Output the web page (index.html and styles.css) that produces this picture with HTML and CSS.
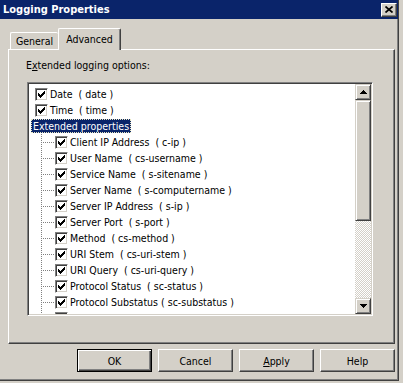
FILE: index.html
```html
<!DOCTYPE html>
<html>
<head>
  <title>Logging Properties</title>
  <link rel="stylesheet" href="styles.css">
</head>
<body>
  <div class="window">
    <div class="titlebar">
      <span class="title">Logging Properties</span>
      <div class="close-btn">
        <svg width="8" height="7" viewBox="0 0 8 7"><path d="M0.5 0.5L7.5 6.5M7.5 0.5L0.5 6.5" stroke="#000" stroke-width="1.7"/></svg>
      </div>
    </div>

    <div class="content">
      <div class="tabs">
        <div class="tab">General</div>
        <div class="tab active">Advanced</div>
      </div>

      <div class="panel">
        <div class="field-label">E<u>x</u>tended logging options:</div>

        <div class="listbox">
          <div class="tree">
            <div class="row root"><span class="cb"></span><span class="label">Date&nbsp; ( date )</span></div>
            <div class="row root"><span class="cb"></span><span class="label">Time&nbsp; ( time )</span></div>
            <div class="row group"><span class="label selected">Extended properties</span></div>
            <div class="row child"><span class="branch"></span><span class="cb"></span><span class="label">Client IP Address&nbsp; ( c-ip )</span></div>
            <div class="row child"><span class="branch"></span><span class="cb"></span><span class="label">User Name&nbsp; ( cs-username )</span></div>
            <div class="row child"><span class="branch"></span><span class="cb"></span><span class="label">Service Name&nbsp; ( s-sitename )</span></div>
            <div class="row child"><span class="branch"></span><span class="cb"></span><span class="label">Server Name&nbsp; ( s-computername )</span></div>
            <div class="row child"><span class="branch"></span><span class="cb"></span><span class="label">Server IP Address&nbsp; ( s-ip )</span></div>
            <div class="row child"><span class="branch"></span><span class="cb"></span><span class="label">Server Port&nbsp; ( s-port )</span></div>
            <div class="row child"><span class="branch"></span><span class="cb"></span><span class="label">Method&nbsp; ( cs-method )</span></div>
            <div class="row child"><span class="branch"></span><span class="cb"></span><span class="label">URI Stem&nbsp; ( cs-uri-stem )</span></div>
            <div class="row child"><span class="branch"></span><span class="cb"></span><span class="label">URI Query&nbsp; ( cs-uri-query )</span></div>
            <div class="row child"><span class="branch"></span><span class="cb"></span><span class="label">Protocol Status&nbsp; ( sc-status )</span></div>
            <div class="row child"><span class="branch"></span><span class="cb"></span><span class="label">Protocol Substatus ( sc-substatus )</span></div>
            <div class="row child"><span class="branch"></span><span class="cb"></span><span class="label">Win32 Status&nbsp; ( sc-win32-status )</span></div>
          </div>

          <div class="scrollbar">
            <div class="sb-btn">
              <svg width="7" height="4" viewBox="0 0 7 4"><rect x="3" y="0" width="1" height="1"/><rect x="2" y="1" width="3" height="1"/><rect x="1" y="2" width="5" height="1"/><rect x="0" y="3" width="7" height="1"/></svg>
            </div>
            <div class="sb-thumb"></div>
            <div class="sb-track"></div>
            <div class="sb-btn">
              <svg width="7" height="4" viewBox="0 0 7 4"><rect x="0" y="0" width="7" height="1"/><rect x="1" y="1" width="5" height="1"/><rect x="2" y="2" width="3" height="1"/><rect x="3" y="3" width="1" height="1"/></svg>
            </div>
          </div>
        </div>
      </div>

      <div class="buttons">
        <div class="btn default">OK</div>
        <div class="btn">Cancel</div>
        <div class="btn"><span><u>A</u>pply</span></div>
        <div class="btn">Help</div>
      </div>
    </div>
  </div>
</body>
</html>
```

FILE: styles.css
```css
* {
  box-sizing: border-box;
}

body {
  margin: 0;
  background-color: #d4d0c8;
  font-family: "DejaVu Sans Condensed", "DejaVu Sans", sans-serif;
  font-size: 10.5px;
  color: #000;
}

.window {
  width: 399px;
  height: 381px;
  background-color: #d4d0c8;
  border-right: 1px solid #404040;
  border-bottom: 1px solid #404040;
  box-shadow: inset -1px -1px #808080;
}

/* title bar */
.titlebar {
  height: 19px;
  background-color: #0a246a;
  display: flex;
  align-items: center;
  justify-content: space-between;
  padding: 0 1px 0 3px;
}

.title {
  color: #fff;
  font-weight: bold;
  font-size: 11px;
}

.close-btn {
  width: 16px;
  height: 14px;
  display: flex;
  align-items: center;
  justify-content: center;
  background-color: #d4d0c8;
  border: 1px solid;
  border-color: #fff #404040 #404040 #fff;
  box-shadow: inset -1px -1px #808080;
}

.content {
  padding: 9px 3px 0 8px;
}

/* tabs */
.tabs {
  display: flex;
  align-items: flex-end;
  height: 21px;
  padding-left: 2px;
}

.tab {
  height: 17px;
  width: 48px;
  display: flex;
  align-items: center;
  justify-content: center;
  border-top: 1px solid #fff;
  border-left: 1px solid #fff;
  border-radius: 2px 2px 0 0;
}

.tab.active {
  width: 63px;
  height: 22px;
  margin-bottom: -1px;
  padding-bottom: 2px;
  position: relative;
  z-index: 1;
  background-color: #d4d0c8;
  border-right: 1px solid #404040;
  box-shadow: inset -1px 0 #808080;
}

.panel {
  height: 295px;
  border: 1px solid;
  border-color: #fff #404040 #404040 #fff;
  box-shadow: inset -1px -1px #808080;
}

.field-label {
  margin: 8px 0 0 17px;
  line-height: 14px;
}

/* tree list */
.listbox {
  margin: 10px 0 0 18px;
  width: 346px;
  height: 234px;
  display: flex;
  background-color: #fff;
  border: 1px solid;
  border-color: #808080 #fff #fff #808080;
  box-shadow: inset 1px 1px #404040, inset -1px -1px #d4d0c8;
  padding: 1px;
}

.tree {
  flex: 1;
  padding-top: 2px;
  overflow: hidden;
}

.row {
  height: 16px;
  display: flex;
  align-items: center;
  white-space: nowrap;
}

.row.root {
  padding-left: 6px;
}

.row.group {
  padding-left: 2px;
}

.row.child {
  padding-left: 12px;
}

.label {
  padding: 0 2px;
  line-height: 14px;
}

.label.selected {
  height: 14px;
  background-color: #0a246a;
  color: #fff;
  outline: 1px dotted #e8e6c0;
  outline-offset: -1px;
}

/* dotted tree lines, one grey pixel in two */
.branch {
  width: 14px;
  align-self: stretch;
  display: flex;
  align-items: flex-start;
  background: repeating-linear-gradient(to bottom, #808080 0 1px, transparent 1px 2px) left top / 1px 100% no-repeat;
}

.branch::after {
  content: '';
  width: 12px;
  height: 1px;
  margin: 8px 0 0 2px;
  background: repeating-linear-gradient(to right, #808080 0 1px, transparent 1px 2px);
}

.cb {
  flex: none;
  width: 13px;
  height: 13px;
  position: relative;
  background-color: #fff;
  border: 1px solid;
  border-color: #808080 #fff #fff #808080;
  box-shadow: inset 1px 1px #404040, inset -1px -1px #d4d0c8;
}

/* classic 7x7 check mark */
.cb::after {
  content: '';
  position: absolute;
  left: 2px;
  top: 2px;
  width: 1px;
  height: 1px;
  box-shadow:
    6px 0 #000,
    5px 1px #000, 6px 1px #000,
    0 2px #000, 4px 2px #000, 5px 2px #000, 6px 2px #000,
    0 3px #000, 1px 3px #000, 3px 3px #000, 4px 3px #000, 5px 3px #000,
    0 4px #000, 1px 4px #000, 2px 4px #000, 3px 4px #000, 4px 4px #000,
    1px 5px #000, 2px 5px #000, 3px 5px #000,
    2px 6px #000;
}

/* scrollbar */
.scrollbar {
  width: 16px;
  display: flex;
  flex-direction: column;
}

.sb-btn,
.sb-thumb {
  background-color: #d4d0c8;
  border: 1px solid;
  border-color: #d4d0c8 #404040 #404040 #d4d0c8;
  box-shadow: inset 1px 1px #fff, inset -1px -1px #808080;
}

.sb-btn {
  height: 16px;
  display: flex;
  align-items: center;
  justify-content: center;
}

.sb-thumb {
  height: 121px;
}

.sb-track {
  flex: 1;
  background-image: conic-gradient(#d4d0c8 25%, #fff 0 50%, #d4d0c8 0 75%, #fff 0);
  background-size: 2px 2px;
}

/* dialog buttons */
.buttons {
  display: flex;
  justify-content: flex-end;
  gap: 6px;
  margin-top: 5px;
}

.btn {
  width: 75px;
  height: 23px;
  display: flex;
  align-items: center;
  justify-content: center;
  border: 1px solid;
  border-color: #fff #404040 #404040 #fff;
  box-shadow: inset -1px -1px #808080;
}

.btn.default {
  border-color: #000;
  box-shadow: inset 1px 1px #fff, inset -1px -1px #404040, inset -2px -2px #808080;
}
```
